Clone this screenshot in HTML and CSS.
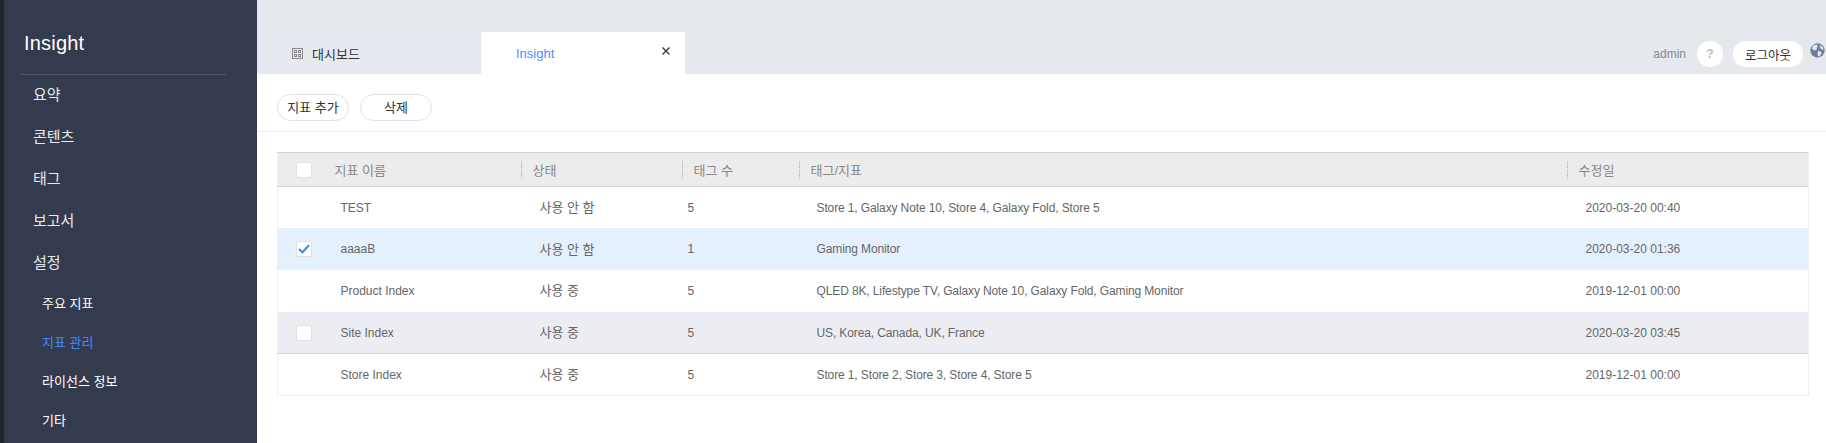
FILE: index.html
```html
<!DOCTYPE html>
<html lang="ko">
  <head>
    <meta charset="UTF-8" />
    <meta name="viewport" content="width=device-width, initial-scale=1.0" />
    <title>Insight</title>
    <link rel="stylesheet" href="styles.css">
  </head>
  <body>
    <aside class="sidebar">
      <h1 class="brand">Insight</h1>
      <ul class="menu">
        <li>요약</li>
        <li>콘텐츠</li>
        <li>태그</li>
        <li>보고서</li>
        <li>설정</li>
      </ul>
      <ul class="submenu">
        <li>주요 지표</li>
        <li class="active">지표 관리</li>
        <li>라이선스 정보</li>
        <li>기타</li>
      </ul>
    </aside>

    <main class="main">
      <header class="topbar">
        <div class="tab tab-home">
          <svg class="tab-icon" width="11" height="11" viewBox="0 0 11 11" fill="none" stroke="#888" stroke-width="1">
            <rect x="0.5" y="0.5" width="10" height="10" />
            <rect x="2.5" y="2.5" width="2" height="2" />
            <rect x="6.5" y="2.5" width="2" height="2" />
            <rect x="2.5" y="6.5" width="2" height="2" />
            <rect x="6.5" y="6.5" width="2" height="2" />
          </svg>
          대시보드
        </div>
        <div class="tab tab-current">
          <span>Insight</span>
          <svg class="tab-close" width="8" height="8" viewBox="0 0 8 8" fill="none" stroke="#333" stroke-width="1.3">
            <path d="M0.5 0.5 L7.5 7.5 M7.5 0.5 L0.5 7.5" />
          </svg>
        </div>
        <div class="user">
          <span class="user-name">admin</span>
          <button class="help">?</button>
          <button class="logout">로그아웃</button>
          <svg class="globe" width="15" height="15" viewBox="0 0 15 15">
            <circle cx="7.5" cy="7.5" r="7.2" fill="#6d809c" />
            <path d="M3 2.5 L6.5 1.5 L8 3 L6.5 5 L7 6.5 L4.5 7.5 L2 5.5 Z M8 8 L11 8.5 L11.5 10.5 L9.5 13.5 L8 13 L7.5 10.5 Z M10 2 L13 4.5 L13.5 7 L11 6 L10 4 Z" fill="#e5e9ef" />
          </svg>
        </div>
      </header>

      <div class="toolbar">
        <button class="btn">지표 추가</button>
        <button class="btn">삭제</button>
      </div>

      <div class="content">
        <table class="grid">
          <colgroup>
            <col class="c-check" />
            <col class="c-name" />
            <col class="c-state" />
            <col class="c-count" />
            <col class="c-tags" />
            <col />
          </colgroup>
          <thead>
            <tr>
              <th><span class="box"></span></th>
              <th class="first">지표 이름</th>
              <th>상태</th>
              <th>태그 수</th>
              <th>태그/지표</th>
              <th>수정일</th>
            </tr>
          </thead>
          <tbody>
            <tr>
              <td></td>
              <td>TEST</td>
              <td class="state">사용 안 함</td>
              <td class="num">5</td>
              <td class="tags">Store 1, Galaxy Note 10, Store 4, Galaxy Fold, Store 5</td>
              <td>2020-03-20 00:40</td>
            </tr>
            <tr class="selected">
              <td>
                <span class="box">
                  <svg width="12" height="10" viewBox="0 0 12 10" fill="none" stroke="#3b8bf5" stroke-width="2.2">
                    <path d="M1 5 L4.5 8.2 L11 1.2" />
                  </svg>
                </span>
              </td>
              <td>aaaaB</td>
              <td class="state">사용 안 함</td>
              <td class="num">1</td>
              <td class="tags">Gaming Monitor</td>
              <td>2020-03-20 01:36</td>
            </tr>
            <tr>
              <td></td>
              <td>Product Index</td>
              <td class="state">사용 중</td>
              <td class="num">5</td>
              <td class="tags">QLED 8K, Lifestype TV, Galaxy Note 10, Galaxy Fold, Gaming Monitor</td>
              <td>2019-12-01 00:00</td>
            </tr>
            <tr class="hover">
              <td><span class="box"></span></td>
              <td>Site Index</td>
              <td class="state">사용 중</td>
              <td class="num">5</td>
              <td class="tags">US, Korea, Canada, UK, France</td>
              <td>2020-03-20 03:45</td>
            </tr>
            <tr>
              <td></td>
              <td>Store Index</td>
              <td class="state">사용 중</td>
              <td class="num">5</td>
              <td class="tags">Store 1, Store 2, Store 3, Store 4, Store 5</td>
              <td>2019-12-01 00:00</td>
            </tr>
          </tbody>
        </table>
      </div>
    </main>
  </body>
</html>
```

FILE: styles.css
```css
* {
  box-sizing: border-box;
}
html,
body {
  height: 100%;
}
body {
  display: flex;
  margin: 0;
  overflow: hidden;
  background: #fff;
  color: #666;
  font-family: "Liberation Sans", "Noto Sans CJK KR", sans-serif;
  font-size: 12px;
}
ul {
  list-style: none;
  margin: 0;
  padding: 0;
}
button {
  font-family: inherit;
  cursor: pointer;
}

/* sidebar */
.sidebar {
  flex: 0 0 257px;
  padding: 0 31px 0 16px;
  background: #353b4e;
  border-left: 4px solid #22252f;
  color: #e8e9ed;
}
.brand {
  height: 75px;
  margin: 0;
  padding: 31px 0 0 4px;
  border-bottom: 1px solid #50566a;
  color: #fff;
  font-size: 20px;
  font-weight: 400;
  line-height: 24px;
  letter-spacing: 0.2px;
}
.menu {
  padding-left: 13px;
  font-size: 15px;
}
.menu li {
  height: 42px;
  line-height: 40px;
}
.submenu {
  padding-left: 22px;
  color: #fff;
  font-size: 13px;
}
.submenu li {
  height: 39px;
  line-height: 38px;
}
.submenu .active {
  color: #3f8cff;
}

/* top tabs */
.main {
  flex: 1;
  min-width: 0;
}
.topbar {
  display: flex;
  align-items: flex-end;
  height: 74px;
  background: #e5e9ee;
}
.tab {
  display: flex;
  align-items: center;
  height: 42px;
  font-size: 13px;
}
.tab-home {
  width: 224px;
  padding-left: 35px;
  background: #e6e9f0;
  color: #333;
}
.tab-icon {
  margin-right: 9px;
}
.tab-current {
  justify-content: space-between;
  width: 204px;
  padding: 0 15px 0 35px;
  background: #fff;
  color: #4f8cff;
}
.tab-close {
  margin-bottom: 4px;
}
.user {
  display: flex;
  align-items: center;
  margin-left: auto;
  padding: 0 1px 7px 0;
}
.user-name {
  margin-right: 11px;
  color: #888;
}
.help {
  width: 26px;
  height: 26px;
  margin-right: 10px;
  padding: 0;
  border: 0;
  border-radius: 50%;
  background: #fff;
  color: #bbb;
  font-size: 12px;
  font-weight: 700;
}
.logout {
  width: 70px;
  height: 26px;
  margin-right: 7px;
  padding: 0;
  border: 0;
  border-radius: 13px;
  background: #fff;
  color: #333;
  font-size: 12.5px;
}
.globe {
  margin-bottom: 7px;
}

/* toolbar */
.toolbar {
  display: flex;
  gap: 11px;
  height: 58px;
  padding: 20px 20px 0;
  border-bottom: 1px solid #eff0f2;
}
.btn {
  width: 72px;
  height: 27px;
  padding: 0 0 2px;
  border: 1px solid #e0e1e6;
  border-radius: 14px;
  background: #fff;
  color: #333;
  font-size: 13px;
}

/* table */
.content {
  padding: 20px 17px 0 20px;
}
.grid {
  width: 100%;
  table-layout: fixed;
  border-collapse: collapse;
  border: 1px solid #f0f0f2;
}
.c-check {
  width: 45px;
}
.c-name {
  width: 199px;
}
.c-state {
  width: 161px;
}
.c-count {
  width: 117px;
}
.c-tags {
  width: 768px;
}
th {
  position: relative;
  height: 34px;
  padding: 0 0 0 11px;
  background: #ececec;
  border-top: 1px solid #d4d4d6;
  border-bottom: 1px solid #d4d4d6;
  color: #888;
  font-size: 13px;
  font-weight: 400;
  text-align: left;
}
th:first-child {
  padding: 0 0 0 18px;
}
th.first {
  padding-left: 12px;
}
th + th:not(.first)::before {
  content: "";
  position: absolute;
  top: 8px;
  left: -1px;
  height: 17px;
  border-left: 1px dotted #aaa;
}
td {
  height: 41.8px;
  padding: 0 0 0 18px;
  color: #666;
}
td.num {
  padding-left: 5px;
}
td.state {
  padding-bottom: 2px;
  font-size: 13px;
}
td.tags {
  padding-left: 17px;
  letter-spacing: -0.12px;
}
.box {
  display: flex;
  align-items: center;
  justify-content: center;
  width: 16px;
  height: 16px;
  border: 1px solid #dedfe3;
  border-radius: 2px;
  background: #fff;
}
.selected td {
  background: #e5f0fe;
}
.hover td {
  background: #ecedf2;
  border-bottom: 1px solid #d4d4d6;
}
```
